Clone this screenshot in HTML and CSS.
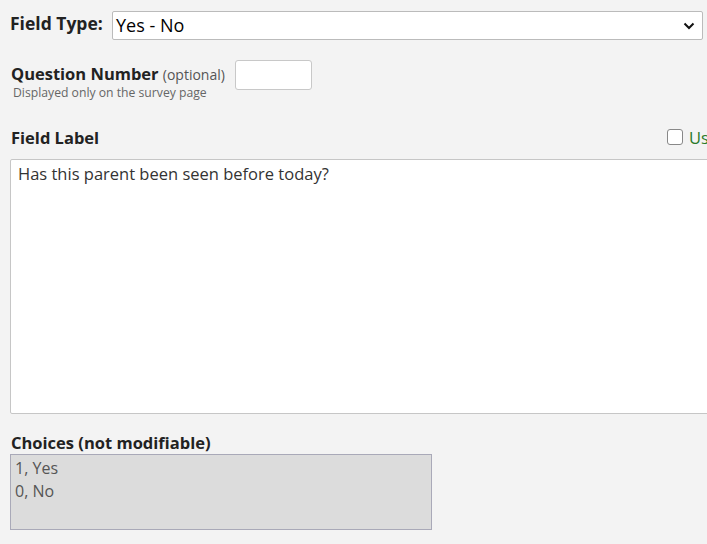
FILE: index.html
```html
<!DOCTYPE html>
<html>
<head>
<meta charset="utf-8">
<link rel="stylesheet" href="styles.css">
</head>
<body>
<div class="page">
  <div class="row-type">
    <span class="lbl-type">Field Type:</span>
    <div class="select">
      <span>Yes - No</span>
      <svg class="chev" width="12" height="8" viewBox="0 0 12 8"><path d="M1.5 1.5 L6 6 L10.5 1.5" fill="none" stroke="#111" stroke-width="2"/></svg>
    </div>
  </div>
  <div class="row-qn">
    <div class="qn-text">
      <div class="qn-line"><span class="lbl">Question Number</span> <span class="opt">(optional)</span></div>
      <div class="hint">Displayed only on the survey page</div>
    </div>
    <div class="qn-input"></div>
  </div>
  <div class="row-fl">
    <span class="lbl">Field Label</span>
    <span class="chk-wrap"><span class="chk"></span><span class="green">Use rich text editor</span></span>
  </div>
  <div class="textarea">Has this parent been seen before today?</div>
  <div class="lbl choices-lbl">Choices (not modifiable)</div>
  <div class="choices">
    <div>1, Yes</div>
    <div>0, No</div>
  </div>
</div>
</body>
</html>
```
FILE: styles.css
```css
html, body {
  margin: 0;
  padding: 0;
  background: #f3f3f3;
  overflow: hidden;
  width: 707px;
  height: 544px;
}
.page {
  font-family: "Open Sans", sans-serif;
  color: #222;
  width: 707px;
  padding-left: 10px;
  box-sizing: border-box;
}
.row-type {
  display: flex;
  align-items: center;
  padding-top: 11px;
  height: 28px;
}
.lbl-type {
  font-weight: bold;
  font-size: 17.5px;
  width: 102px;
  position: relative;
  top: -2px;
}
.select {
  width: 591px;
  height: 29px;
  flex-shrink: 0;
  box-sizing: border-box;
  border: 1px solid #bbb;
  border-radius: 2px;
  background: #fff;
  display: flex;
  align-items: center;
  justify-content: space-between;
  padding: 0 5px 0 3px;
  font-size: 18px;
  color: #000;
}
.chev { margin-right: 2px; margin-top: 1px; }
.row-qn {
  display: flex;
  margin-top: 21px;
  align-items: flex-start;
}
.qn-text { width: 224px; padding-left: 1px; padding-top: 3px; }
.qn-line { line-height: 22px; white-space: nowrap; }
.lbl { font-weight: bold; font-size: 16.5px; color: #222; }
.opt { font-size: 14px; color: #555; }
.hint { font-size: 12.2px; line-height: 14px; color: #666; padding-left: 2px; white-space: nowrap; }
.qn-input {
  width: 77px;
  height: 30px;
  flex-shrink: 0;
  box-sizing: border-box;
  border: 1px solid #c8c8c8;
  border-radius: 3px;
  background: #fff;
}
.row-fl {
  display: flex;
  justify-content: space-between;
  align-items: center;
  margin-top: 25px;
  padding-left: 1px;
  height: 24px;
}
.chk-wrap { display: flex; align-items: center; width: 40px; flex-shrink: 0; white-space: nowrap; overflow: visible; }
.chk {
  flex-shrink: 0;
  width: 14px;
  height: 14px;
  border: 1px solid #888;
  border-radius: 3px;
  background: #fff;
  margin-right: 6px;
}
.green { color: #2a7a2a; font-size: 16.5px; }
.textarea {
  margin-top: 10px;
  width: 720px;
  height: 255px;
  box-sizing: border-box;
  border: 1px solid #c6c6c6;
  border-radius: 2px;
  background: #fff;
  padding: 2px 7px;
  font-size: 16.5px;
  color: #333;
}
.choices-lbl { margin-top: 18px; padding-left: 1px; line-height: 22px; }
.choices {
  width: 422px;
  height: 76px;
  box-sizing: border-box;
  border: 1px solid #a9a9b8;
  background: #dcdcdc;
  padding: 2px 4px;
  font-size: 16px;
  color: #555;
  line-height: 23px;
}
```
